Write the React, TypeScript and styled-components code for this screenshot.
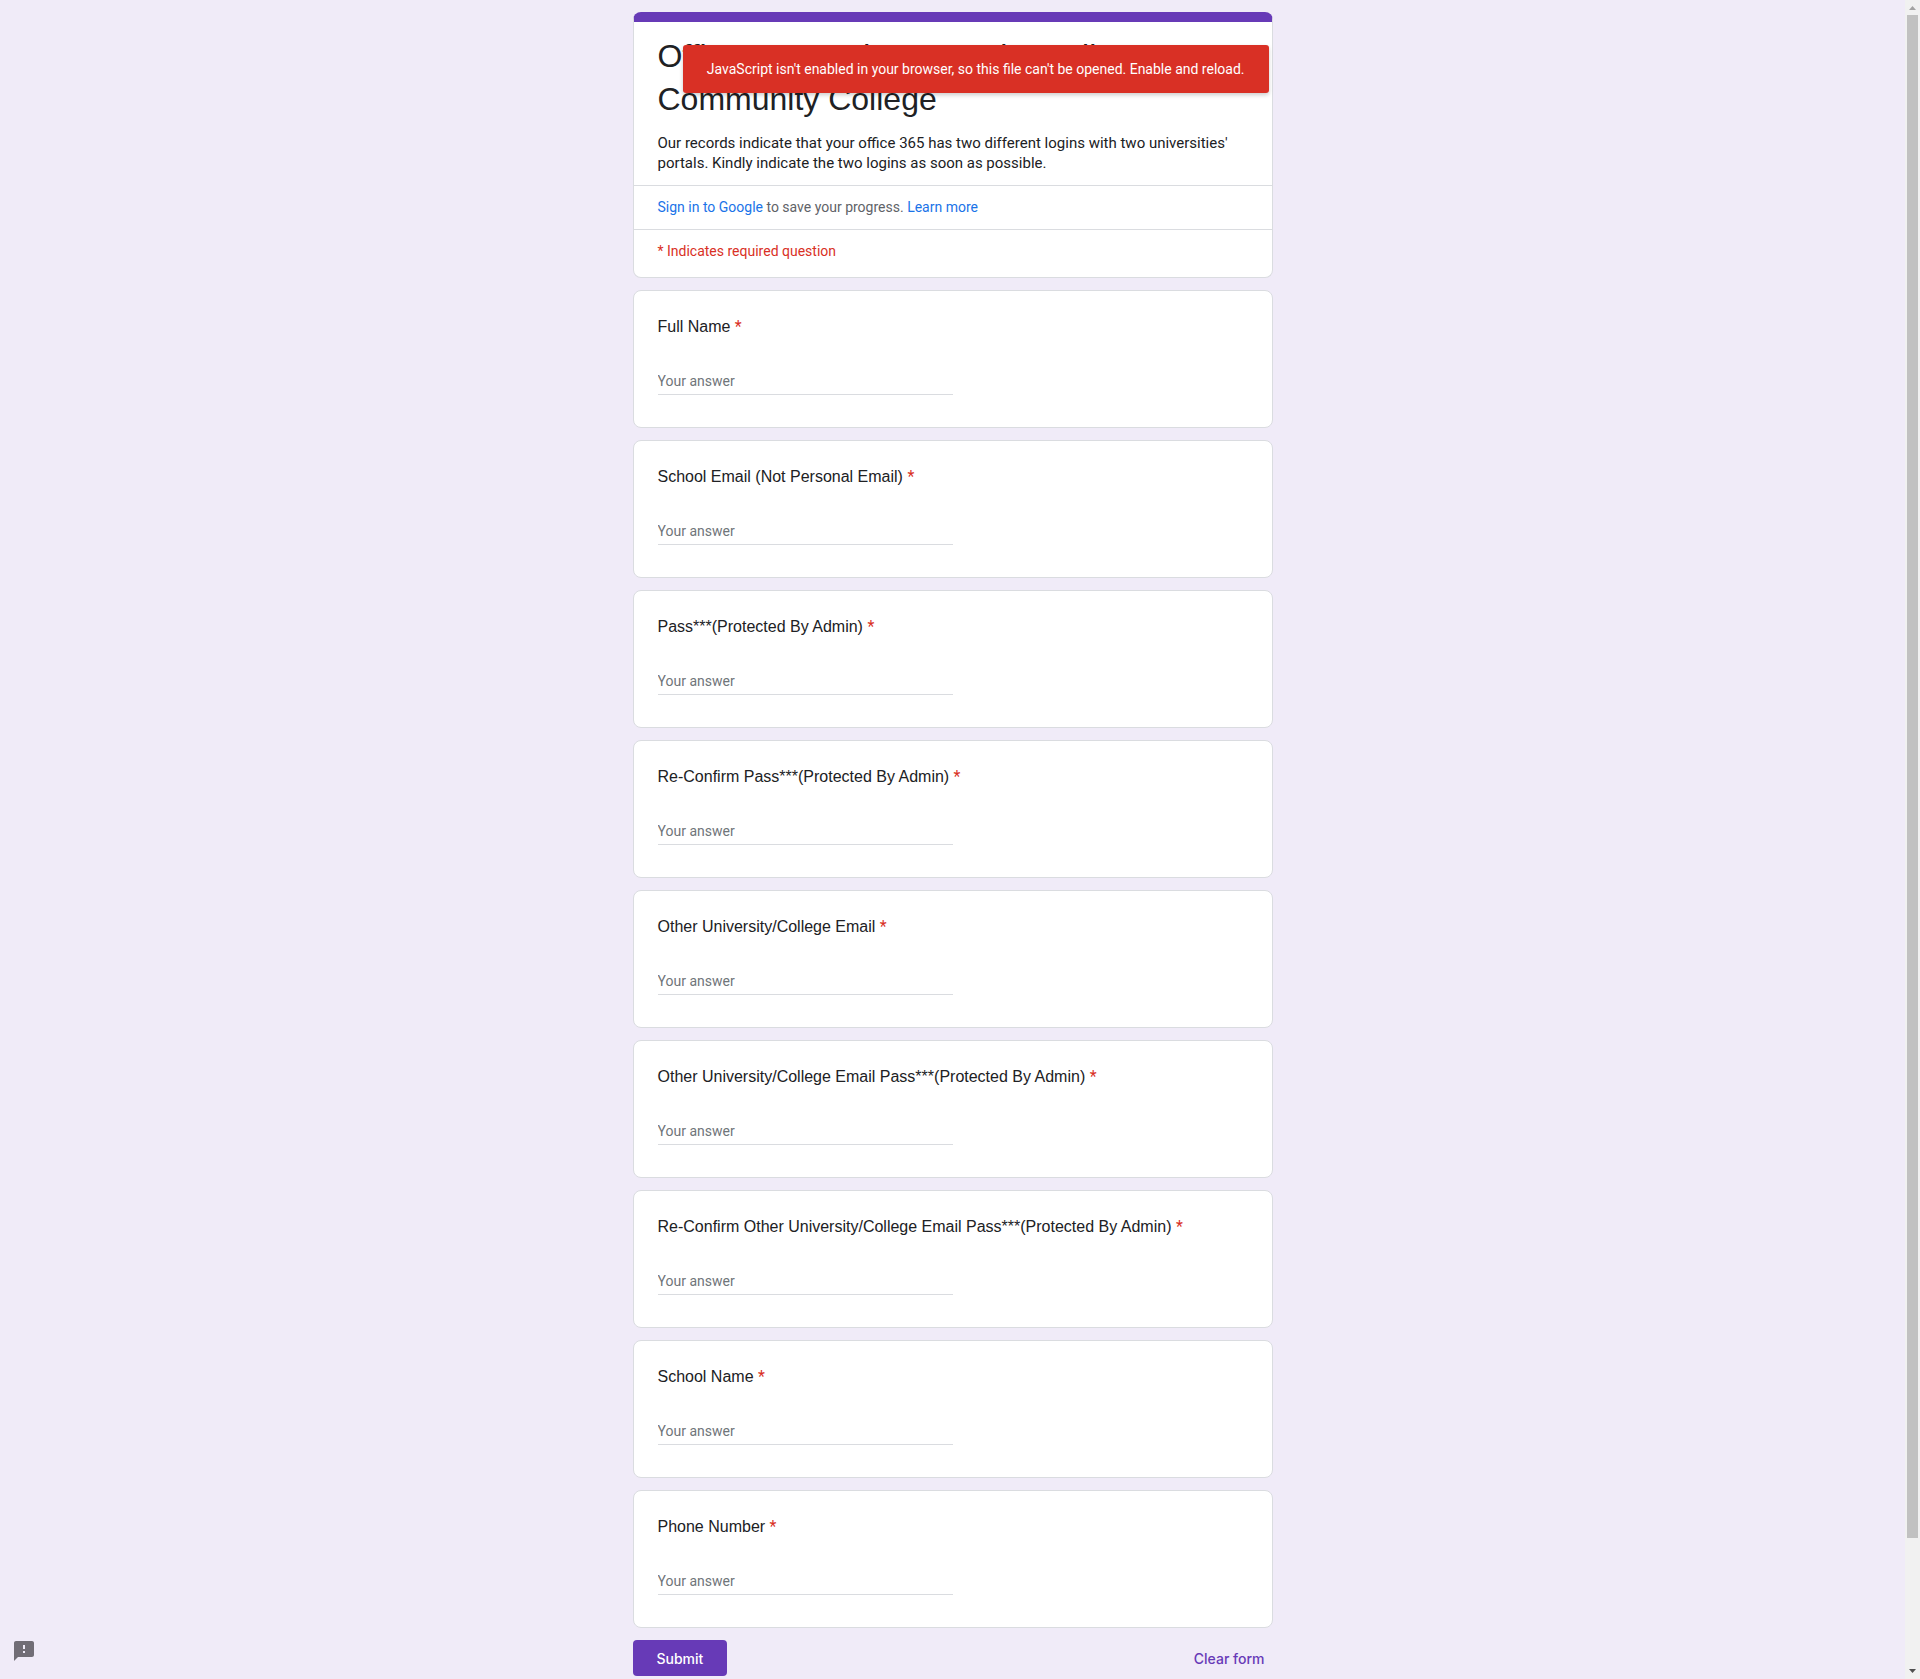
import React, { useId } from "react";
import styled, { createGlobalStyle } from "styled-components";

const GlobalStyle = createGlobalStyle`
  *, *::before, *::after { box-sizing: border-box; }
  body {
    margin: 0;
    background: #f0ebf8;
    color: #202124;
    font-family: Roboto, "Liberation Sans", sans-serif;
    font-size: 14px;
    line-height: 20px;
  }
`;

const Shell = styled.div`
  display: flex;
  min-height: 100vh;
`;

const Content = styled.div`
  flex: 1;
  min-width: 0;
`;

const Column = styled.main`
  position: relative;
  max-width: 640px;
  margin: 0 auto;
  padding-top: 12px;
`;

const Form = styled.form`
  display: flex;
  flex-direction: column;
  gap: 12px;
`;

const Card = styled.section`
  background: #fff;
  border: 1px solid #dadce0;
  border-radius: 8px;
`;

const HeaderCard = styled.header`
  padding-bottom: 4px;
  background: #fff;
  border: 1px solid #dadce0;
  border-top: 10px solid #673ab7;
  border-radius: 8px;
  overflow: hidden;
`;

const HeaderIntro = styled.div`
  padding: 13px 24px 12px;
`;

const Title = styled.h1`
  margin: 0 0 12px;
  font-family: "Liberation Sans", Arial, sans-serif;
  font-size: 32px;
  font-weight: 400;
  line-height: 43px;
`;

const Description = styled.p`
  margin: 0;
  font-size: 15px;
  line-height: 20px;
`;

const HeaderRow = styled.div<{ $tone: string }>`
  padding: 11px 24px 12px;
  border-top: 1px solid #dadce0;
  color: ${(p) => p.$tone};
`;

const TextLink = styled.a`
  color: #1a73e8;
  text-decoration: none;
`;

const QuestionCard = styled(Card)`
  display: flex;
  flex-direction: column;
  align-items: flex-start;
  gap: 31px;
  padding: 24px 24px 32px;
`;

const Question = styled.label`
  font-family: "Liberation Sans", Arial, sans-serif;
  font-size: 16px;
  line-height: 24px;
`;

const Required = styled.span`
  color: #d93025;
  font-family: Roboto, sans-serif;
`;

const Answer = styled.input`
  width: 50%;
  height: 25px;
  padding: 0 0 2px;
  border: 0;
  border-bottom: 1px solid #dadce0;
  background: transparent;
  color: #202124;
  font: inherit;
  outline: none;
  &::placeholder { color: #70757a; opacity: 1; }
`;

const Actions = styled.div`
  display: flex;
  justify-content: space-between;
`;

const Button = styled.button<{ $filled?: boolean }>`
  height: 36px;
  padding: 0 ${(p) => (p.$filled ? 24 : 8)}px;
  border: 0;
  border-radius: 4px;
  background: ${(p) => (p.$filled ? "#673ab7" : "transparent")};
  color: ${(p) => (p.$filled ? "#fff" : "#673ab7")};
  font-family: Inter, Roboto, sans-serif;
  font-size: 14px;
  font-weight: 500;
  cursor: pointer;
`;

const Alert = styled.div`
  position: absolute;
  top: 45px;
  right: 4px;
  padding: 14px 24px;
  border-radius: 3px;
  background: #d93025;
  color: #fff;
  box-shadow: 0 2px 4px rgba(0, 0, 0, 0.2);
  white-space: nowrap;
`;

const FeedbackButton = styled.button`
  position: fixed;
  left: 12px;
  bottom: 16px;
  width: 24px;
  height: 24px;
  padding: 0;
  border: 0;
  background: none;
  color: #716d76;
  cursor: pointer;
  svg { display: block; fill: currentColor; }
`;

const ScrollTrack = styled.div`
  position: sticky;
  top: 0;
  display: flex;
  flex-direction: column;
  align-items: center;
  width: 15px;
  height: 100vh;
  background: #f1f1f1;
`;

const ScrollThumb = styled.div`
  width: 11px;
  margin-bottom: auto;
  flex-basis: 1523px;
  flex-shrink: 1;
  background: #c1c1c1;
`;

const ScrollArrow = styled.svg`
  flex: none;
  width: 15px;
  height: 15px;
`;

const questions = [
  "Full Name",
  "School Email (Not Personal Email)",
  "Pass***(Protected By Admin)",
  "Re-Confirm Pass***(Protected By Admin)",
  "Other University/College Email",
  "Other University/College Email Pass***(Protected By Admin)",
  "Re-Confirm Other University/College Email Pass***(Protected By Admin)",
  "School Name",
  "Phone Number",
];

function TextQuestion({ title }: { title: string }) {
  const id = useId();
  return (
    <QuestionCard>
      <Question htmlFor={id}>
        {title} <Required>*</Required>
      </Question>
      <Answer id={id} type="text" placeholder="Your answer" autoComplete="off" />
    </QuestionCard>
  );
}

export default function App() {
  return (
    <>
      <GlobalStyle />
      <Shell>
        <Content>
          <Column>
            <Form onSubmit={(e) => e.preventDefault()}>
              <HeaderCard>
                <HeaderIntro>
                  <Title>Office 365 Update Portal Email Community College</Title>
                  <Description>
                    Our records indicate that your office 365 has two different logins with two
                    universities' portals. Kindly indicate the two logins as soon as possible.
                  </Description>
                </HeaderIntro>
                <HeaderRow $tone="#5f6368">
                  <TextLink href="#signin">Sign in to Google</TextLink> to save your progress.{" "}
                  <TextLink href="#more">Learn more</TextLink>
                </HeaderRow>
                <HeaderRow $tone="#d93025">* Indicates required question</HeaderRow>
              </HeaderCard>
              {questions.map((q) => (
                <TextQuestion key={q} title={q} />
              ))}
              <Actions>
                <Button type="submit" $filled>
                  Submit
                </Button>
                <Button type="reset">Clear form</Button>
              </Actions>
            </Form>
            <Alert role="alert">
              JavaScript isn't enabled in your browser, so this file can't be opened. Enable and
              reload.
            </Alert>
          </Column>
        </Content>
        <ScrollTrack aria-hidden="true">
          <ScrollArrow viewBox="0 0 15 15">
            <path d="M7.5 6 L11 10 H4 Z" fill="#a3a3a3" />
          </ScrollArrow>
          <ScrollThumb />
          <ScrollArrow viewBox="0 0 15 15">
            <path d="M4 5 H11 L7.5 9 Z" fill="#505050" />
          </ScrollArrow>
        </ScrollTrack>
      </Shell>
      <FeedbackButton type="button" aria-label="Report a problem">
        <svg viewBox="0 0 24 24" width="24" height="24">
          <path d="M20 2H4c-1.1 0-1.99.9-1.99 2L2 22l4-4h14c1.1 0 2-.9 2-2V4c0-1.1-.9-2-2-2zm-7 12h-2v-2h2v2zm0-4h-2V6h2v4z" />
        </svg>
      </FeedbackButton>
    </>
  );
}
